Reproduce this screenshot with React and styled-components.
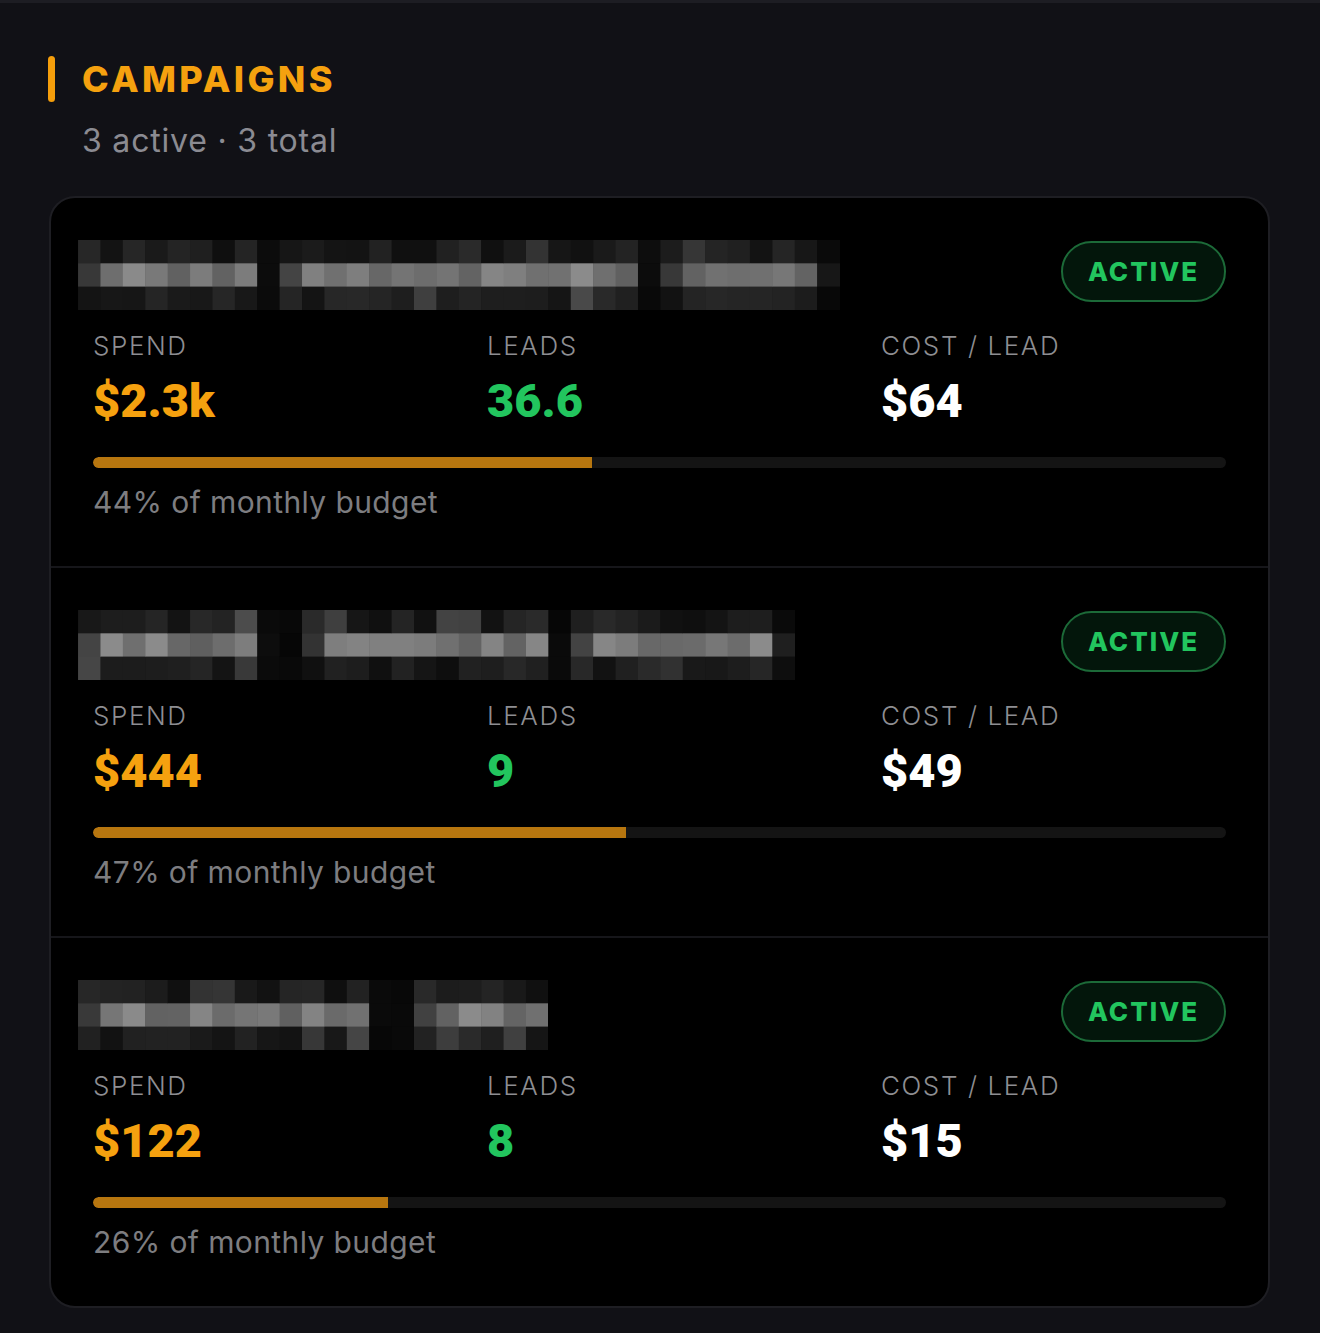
import styled, { createGlobalStyle } from "styled-components"

const GlobalStyle = createGlobalStyle`
    html, body {
        margin: 0;
        padding: 0;
        background: #111116;
    }
    body {
        font-family: "Poppins", "Inter", "Noto Sans", sans-serif;
        -webkit-font-smoothing: antialiased;
    }
`

const Page = styled.div`
    min-height: 1333px;
    box-sizing: border-box;
    border-top: 3px solid #1d1d23;
    padding: 53px 50px 40px 49px;
`

const Header = styled.div`
    display: flex;
    flex-direction: column;
    gap: 20px;
    margin-bottom: 36px;
`

const TitleRow = styled.div`
    display: flex;
    align-items: center;
    gap: 27px;
    margin-left: -1px;
`

const TitleBar = styled.span`
    width: 7px;
    height: 46px;
    border-radius: 4px;
    background: #f59e0b;
`

const Title = styled.h1`
    margin: 0;
    font-family: "Inter", sans-serif;
    font-weight: 800;
    font-size: 36px;
    letter-spacing: 3.3px;
    line-height: 1;
    color: #f5a10f;
`

const Subtitle = styled.p`
    margin: 0 0 0 33px;
    font-family: "Inter", sans-serif;
    font-weight: 400;
    font-size: 32px;
    letter-spacing: 0.8px;
    line-height: 1.2;
    color: #8b8b92;
`

const Card = styled.div`
    background: #000;
    border: 2px solid #1e1e23;
    border-radius: 26px;
    overflow: hidden;
`

const Section = styled.div`
    height: ${(p) => (p.first ? 368 : 370)}px;
    box-sizing: border-box;
    padding: 40px 42px 0 42px;
    border-top: ${(p) => (p.first ? "none" : "2px solid #16161a")};
`

const TopRow = styled.div`
    display: flex;
    justify-content: space-between;
    align-items: center;
    height: 70px;
`

const Mosaic = styled.svg`
    display: block;
    margin-left: -15px;
    margin-top: 4px;
`

const Badge = styled.span`
    display: flex;
    align-items: center;
    justify-content: center;
    box-sizing: border-box;
    width: 165px;
    height: 61px;
    margin-top: -3px;
    border: 2px solid #1c6a38;
    border-radius: 31px;
    background: #03160b;
    font-family: "Inter", sans-serif;
    font-weight: 800;
    font-size: 26px;
    letter-spacing: 2px;
    color: #22c55e;
`

const Stats = styled.div`
    display: grid;
    grid-template-columns: repeat(3, 1fr);
    column-gap: 49px;
    margin-top: 22px;
`

const Stat = styled.div`
    display: flex;
    flex-direction: column;
    gap: 13px;
`

const Label = styled.span`
    font-family: "Inter", sans-serif;
    font-weight: 300;
    font-size: 26px;
    line-height: 1.2;
    letter-spacing: 1.6px;
    color: #8e8e92;
`

const Value = styled.span`
    font-family: "Roboto", sans-serif;
    font-weight: 900;
    font-size: 47px;
    line-height: 1.1;
    color: ${(p) => p.color};
`

const Track = styled.div`
    margin-top: 31px;
    height: 11px;
    border-radius: 6px;
    background: #141414;
    overflow: hidden;
`

const Fill = styled.div`
    height: 100%;
    border-radius: 6px 0 0 6px;
    background: #b7760f;
`

const BudgetNote = styled.p`
    margin: 16px 0 0;
    font-family: "Inter", sans-serif;
    font-weight: 400;
    font-size: 30px;
    letter-spacing: 0.4px;
    line-height: 1.2;
    color: #7d7d80;
`

const CELL = 22.4
const ROW = 23.3

const makeRand = (seed) => () => {
    seed = (seed * 9301 + 49297) % 233280
    return seed / 233280
}

// pixelated name: w = word cells, g = blank cells, f = fading edge
const Pixelated = ({ pattern, seed }) => {
    const rand = makeRand(seed)
    const cells = pattern.split("")
    const rects = []
    cells.forEach((c, i) => {
        for (let r = 0; r < 3; r++) {
            let v
            if (c === "g") v = 6 + rand() * 8
            else if (c === "f") v = r === 1 ? 22 + rand() * 10 : 8 + rand() * 6
            else if (r === 1) {
                const edge = cells[i - 1] !== "w"
                v = edge ? 50 + rand() * 20 : 95 + rand() * 45
            } else {
                const bump = rand() > 0.88 ? 35 : 0
                v = 14 + rand() * 28 + bump
            }
            const g = Math.round(v)
            rects.push(
                <rect key={i + "-" + r} x={i * CELL} y={r * ROW} width={CELL + 0.5} height={ROW + 0.5} fill={`rgb(${g},${g},${g})`} />
            )
        }
    })
    return (
        <Mosaic width={cells.length * CELL} height={ROW * 3} viewBox={`0 0 ${cells.length * CELL} ${ROW * 3}`}>
            {rects}
        </Mosaic>
    )
}

const campaigns = [
    { pattern: "wwwwwwwwgwwwwwwwwwwwwwwwwgwwwwwwwf", seed: 11, spend: "$2.3k", leads: "36.6", cpl: "$64", pct: 44 },
    { pattern: "wwwwwwwwggwwwwwwwwwwwgwwwwwwwwwf", seed: 57, spend: "$444", leads: "9", cpl: "$49", pct: 47 },
    { pattern: "wwwwwwwwwwwwwggwwwwww", seed: 133, spend: "$122", leads: "8", cpl: "$15", pct: 26 },
]

const CampaignRow = ({ c, first }) => (
    <Section first={first}>
        <TopRow>
            <Pixelated pattern={c.pattern} seed={c.seed} />
            <Badge>ACTIVE</Badge>
        </TopRow>
        <Stats>
            <Stat>
                <Label>SPEND</Label>
                <Value color="#f5a10f">{c.spend}</Value>
            </Stat>
            <Stat>
                <Label>LEADS</Label>
                <Value color="#22c55e">{c.leads}</Value>
            </Stat>
            <Stat>
                <Label>COST / LEAD</Label>
                <Value color="#ffffff">{c.cpl}</Value>
            </Stat>
        </Stats>
        <Track>
            <Fill style={{ width: c.pct + "%" }} />
        </Track>
        <BudgetNote>{c.pct}% of monthly budget</BudgetNote>
    </Section>
)

const App = () => (
    <>
        <GlobalStyle />
        <Page>
            <Header>
                <TitleRow>
                    <TitleBar />
                    <Title>CAMPAIGNS</Title>
                </TitleRow>
                <Subtitle>3 active · 3 total</Subtitle>
            </Header>
            <Card>
                {campaigns.map((c, i) => (
                    <CampaignRow key={i} c={c} first={i === 0} />
                ))}
            </Card>
        </Page>
    </>
)

export default App
